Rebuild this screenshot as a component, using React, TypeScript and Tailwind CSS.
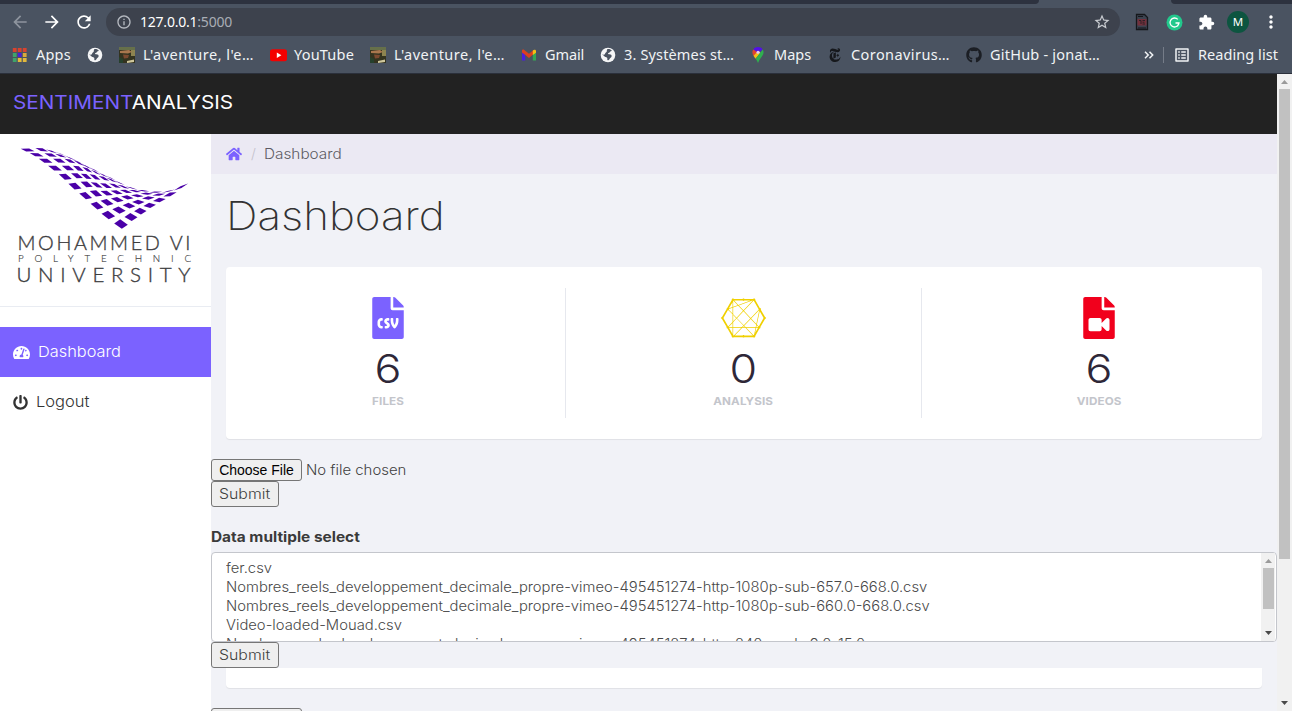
import React from "react";
import {
  FaConnectdevelop,
  FaFileCsv,
  FaFileVideo,
  FaGithub,
  FaHome,
  FaPowerOff,
  FaTachometerAlt,
} from "react-icons/fa";
import {
  MdArrowBack,
  MdArrowForward,
  MdExtension,
  MdInfoOutline,
  MdMoreVert,
  MdOutlineListAlt,
  MdRefresh,
  MdStarBorder,
} from "react-icons/md";
import { SiNewyorktimes } from "react-icons/si";

function AppsIcon() {
  const rows = [
    ["#d8432f", "#d8432f", "#d8432f"],
    ["#3fa46a", "#4b1fd6", "#d9a93c"],
    ["#3fa46a", "#e3b93c", "#e3b93c"],
  ];
  return (
    <svg width="16" height="16" viewBox="0 0 16 16">
      {rows.map((row, y) =>
        row.map((c, x) => <rect key={`${x}-${y}`} x={0.8 + x * 5} y={1 + y * 5} width="3.8" height="4" fill={c} />),
      )}
    </svg>
  );
}

function Globe() {
  return (
    <svg width="16" height="16" viewBox="0 0 16 16">
      <circle cx="8" cy="8" r="7.3" fill="#f5f6f7" />
      <path d="M7.2 2.2c1.6-.4 4 .3 4.600 1.400-.3 1-1.500.7-1.900 1.500-.3.900-1.300.6-1.800 1.200-.3.700.3 1 1.200 1 1.400-.1 2.600.8 2.300 2.100-.4 1.100-1.600 1.300-1.900 2.300-.2.800-1.100 1.600-2 1.500-.9-.3.100-1.600-.6-2.400-.8-.8-2.300-.5-2.900-1.800L2 7.200c.2 0 1.600.8 2.500.4.900-.3.300-1.400 1.100-1.900.8-.3 1.400-.8 1.100-1.600z" fill="#4a5361" />
    </svg>
  );
}

function PhotoIcon() {
  return (
    <svg width="16" height="16" viewBox="0 0 16 16">
      <rect width="16" height="16" fill="#34331f" />
      <rect width="16" height="3" fill="#66704a" />
      <rect x="12" y="3" width="4" height="6" fill="#8d8450" />
      <path d="M1 4l9-1 3 2-4 1.500-8-.5z" fill="#a9774e" />
      <path d="M4 7.500l6 .5-1 3-4 .5z" fill="#7d4a30" />
      <path d="M0 10l4 2v4H0z" fill="#26402c" />
      <path d="M8 14l7-1.500v2.500l-7 1z" fill="#cfc79c" />
    </svg>
  );
}

function YoutubeIcon() {
  return (
    <svg width="17" height="16" viewBox="0 0 17 16" className="shrink-0">
      <rect x="0" y="2.200" width="17" height="12" rx="2.500" fill="#f40000" />
      <path d="M6.800 5.500l4.600 2.700-4.600 2.700z" fill="#fff" />
    </svg>
  );
}

function GmailIcon() {
  return (
    <svg width="16" height="16" viewBox="0 0 16 16">
      <path d="M1 4v9.500h3.200V6z" fill="#4a1fe0" />
      <path d="M11.800 6v7.500H15V4z" fill="#34a853" />
      <path d="M1 3.500C1 2.500 2.500 2.300 3.300 3L8 6.700 12 3.500V7.500L8 10.900 4 7.700 1 5.500z" fill="#dc3f1f" />
      <path d="M11.800 3.500c1-1 3.200-.9 3.200.6v1.600l-3.200 2.300z" fill="#f6bd16" />
    </svg>
  );
}

function MapsIcon() {
  return (
    <svg width="16" height="18" viewBox="0 0 16 18">
      <path d="M3.300 3.500a5.600 5.600 0 0 1 9.400 0L8 7.500z" fill="#5310e8" />
      <path d="M3.300 3.500C1.800 5.500 2.300 8 3.500 9.800L8 6.500z" fill="#e0452f" />
      <path d="M3.500 9.800l5-5 2 2-5 6z" fill="#f6bd16" />
      <path d="M12.700 3.500c2 3.300.2 5.800-1.700 8.200C9.600 13.500 8.800 15 8 17c-.6-1.700-1.300-3-2.400-4.300z" fill="#2fb04f" />
      <circle cx="8" cy="6.300" r="1.500" fill="#d9d0f5" />
    </svg>
  );
}

function Bookmark({ icon, children, className }: { icon: React.ReactNode; children?: React.ReactNode; className: string }) {
  return (
    <div className="mr-4 flex shrink-0 items-center">
      <span className="flex w-4 shrink-0 items-center justify-center">{icon}</span>
      {children && <span className={"ml-2 whitespace-nowrap " + className}>{children}</span>}
    </div>
  );
}

function BrowserChrome() {
  return (
    <header className="flex h-[74px] shrink-0 flex-col border-b border-[#2b303b] bg-[#4a5361] font-['Noto_Sans',sans-serif] text-[#f1f3f5]">
      <div className="flex h-1 shrink-0">
        <div className="w-[1039px] rounded-br-[4px] bg-[#2d323f]" />
        <div className="flex-1" />
        <div className="w-[121px] rounded-bl-[4px] bg-[#2d323f]" />
      </div>
      <div className="flex h-9 shrink-0 items-center">
        <MdArrowBack className="ml-[10px] size-5 text-[#8e949e]" />
        <MdArrowForward className="ml-3 size-5 text-white" />
        <MdRefresh className="ml-3 size-5 text-white" />
        <div className="ml-3 flex h-7 w-[1014px] items-center rounded-full bg-[#3d424d] pr-[9px] pl-[10px]">
          <MdInfoOutline className="size-4 text-[#b6bac1]" />
          <span className="ml-2 text-[14px] leading-7 tracking-[-0.22px] text-white">
            127.0.0.1<span className="text-[#a9adb5]">:5000</span>
          </span>
          <MdStarBorder className="ml-auto size-[18px] text-[#c9ccd1]" />
        </div>
        <svg className="ml-[15px]" width="14" height="18" viewBox="0 0 14 18">
          <path d="M1.500 1.500h8l3 3v12h-11z" fill="#3c4350" stroke="#15171b" strokeWidth="1.300" />
          <path d="M3 3.500h5M3 15h8" stroke="#15171b" />
          <rect x="2.500" y="6" width="9" height="6.500" fill="#74303c" />
          <path d="M4 7.500h2v3.500M7.500 7.500h2.500M7.500 9.200h2M7.500 11h2.500" stroke="#2b2228" fill="none" />
        </svg>
        <svg className="ml-[17px]" width="17" height="17" viewBox="0 0 17 17">
          <circle cx="8.500" cy="8.500" r="8" fill="#22c88c" />
          <path d="M11.800 5.400A4.500 4.500 0 1 0 13 9H9.500M13 9l-1.500 3.300" fill="none" stroke="#fff" strokeWidth="1.300" />
        </svg>
        <MdExtension className="ml-[15px] size-[17px] text-white" />
        <span className="ml-[12px] flex size-[22px] items-center justify-center rounded-full bg-[#0d5540] text-[11.5px] font-normal text-white">M</span>
        <MdMoreVert className="ml-[12px] size-5 text-white" />
      </div>
      <div className="flex h-[30px] items-center pl-3 text-[14.5px]">
        <Bookmark icon={<AppsIcon />} className="w-[35px] tracking-[0.2px]">Apps</Bookmark>
        <Bookmark icon={<Globe />} className="" />
        <Bookmark icon={<PhotoIcon />} className="w-[111px] tracking-[0.48px]">L'aventure, l'e…</Bookmark>
        <Bookmark icon={<YoutubeIcon />} className="w-[60px] tracking-[0.2px]">YouTube</Bookmark>
        <Bookmark icon={<PhotoIcon />} className="w-[111px] tracking-[0.48px]">L'aventure, l'e…</Bookmark>
        <Bookmark icon={<GmailIcon />} className="w-[39px] tracking-[-0.1px]">Gmail</Bookmark>
        <Bookmark icon={<Globe />} className="w-[110px] tracking-[0.15px]">3. Systèmes st…</Bookmark>
        <Bookmark icon={<MapsIcon />} className="w-[37px]">Maps</Bookmark>
        <Bookmark icon={<SiNewyorktimes className="size-[14px] text-[#16181c]" />} className="w-[99px] tracking-[0.42px]">Coronavirus…</Bookmark>
        <Bookmark icon={<FaGithub className="size-4 text-[#1b1e24]" />} className="w-[110px] tracking-[0.22px]">GitHub - jonat…</Bookmark>
        <svg className="ml-[28px] shrink-0" width="10" height="10" viewBox="0 0 10 10" fill="none" stroke="#f1f3f5" strokeWidth="1.500">
          <path d="M1 1.800L4.200 5 1 8.200M5.500 1.800L8.700 5 5.500 8.200" />
        </svg>
        <div className="ml-[9px] h-4 w-px bg-[#757c88]" />
        <MdOutlineListAlt className="ml-[9px] size-[18px] shrink-0" />
        <span className="ml-[7px] tracking-[0.06px] whitespace-nowrap">Reading list</span>
      </div>
    </header>
  );
}

const MESH: [number, number][][] = [
  [[83, 223], [110, 237], [137, 255], [165, 277], [196, 303], [225, 331], [257, 360], [291, 390], [325, 418], [363, 445]],
  [[125, 222], [152, 238], [178, 255], [204, 277], [231, 300], [260, 326], [288, 353], [321, 380], [357, 403], [393, 424]],
  [[155, 227], [182, 240], [210, 256], [235, 278], [259, 302], [290, 328], [320, 352], [352, 372], [387, 390], [421, 406]],
  [[183, 235], [211, 247], [237, 262], [262, 282], [285, 304], [318, 330], [350, 350], [382, 365], [415, 379], [449, 389]],
  [[208, 246], [236, 259], [261, 273], [287, 290], [312, 308], [345, 330], [378, 347], [412, 360], [445, 367], [478, 373]],
  [[230, 257], [259, 270], [285, 284], [310, 298], [335, 313], [370, 333], [405, 346], [440, 354], [476, 357], [510, 356]],
  [[250, 268], [280, 281], [306, 294], [332, 307], [358, 321], [395, 337], [430, 345], [467, 349], [505, 347], [543, 334]],
];

function meshTiles() {
  const out: string[] = [];
  MESH.forEach((row, j) =>
    row.forEach(([x, y], i) => {
      const i0 = Math.max(i - 1, 0);
      const i1 = Math.min(i + 1, 9);
      const j0 = Math.max(j - 1, 0);
      const j1 = Math.min(j + 1, 6);
      const k = 0.3;
      const ux = ((row[i1][0] - row[i0][0]) / (i1 - i0)) * k;
      const uy = ((row[i1][1] - row[i0][1]) / (i1 - i0)) * k;
      const vx = ((MESH[j1][i][0] - MESH[j0][i][0]) / (j1 - j0)) * k;
      const vy = ((MESH[j1][i][1] - MESH[j0][i][1]) / (j1 - j0)) * k;
      out.push(
        [
          [x - ux - vx, y - uy - vy],
          [x - ux + vx, y - uy + vy],
          [x + ux + vx, y + uy + vy],
          [x + ux - vx, y + uy - vy],
        ]
          .map(([px, py]) => `${(px / 3).toFixed(2)},${(py / 3 - 58.3).toFixed(2)}`)
          .join(" "),
      );
    }),
  );
  return out;
}

function UniversityLogo() {
  return (
    <svg width="211" height="160" viewBox="0 0 211 160" className="block">
      <g fill="#4a00a8">
        {meshTiles().map((points, i) => (
          <polygon key={i} points={points} />
        ))}
      </g>
      <g fill="#3c3c3e" stroke="#3c3c3e" strokeWidth="0.350" className="font-[Lato,sans-serif] font-light">
        <text x="17.500" y="116" fontSize="19.800" textLength="173">MOHAMMED VI</text>
        <text x="18" y="127.800" fontSize="9.800" textLength="173" strokeWidth="0.150">POLYTECHNIC</text>
        <text x="16.500" y="148" fontSize="20.500" textLength="174">UNIVERSITY</text>
      </g>
    </svg>
  );
}

function Sidebar() {
  return (
    <aside className="flex w-[211px] shrink-0 flex-col bg-white text-[15px] font-light text-[#333]">
      <div className="h-[173px] border-b border-[#e9ecf2]">
        <UniversityLogo />
      </div>
      <nav className="mt-5 flex flex-col">
        <a className="flex h-[50px] items-center bg-[#7b62ff] pl-[13px] text-white">
          <FaTachometerAlt className="size-[17px]" />
          <span className="ml-2 origin-left scale-x-[1.09]">Dashboard</span>
        </a>
        <a className="flex h-[50px] items-center pl-[13px]">
          <FaPowerOff className="size-[15px]" />
          <span className="ml-2 origin-left scale-x-[1.1]">Logout</span>
        </a>
      </nav>
    </aside>
  );
}

function Stat({ icon, value, label, last }: { icon: React.ReactNode; value: string; label: string; last?: boolean }) {
  return (
    <div className={"flex flex-1 flex-col items-center border-r pt-[9px] " + (last ? "border-transparent" : "border-[#e6e8ee]")}>
      <div className="flex h-[42px] items-center">{icon}</div>
      <div className="mt-[5px] flex h-[50px] items-center text-[40px] leading-none font-light text-[#2e2738]">
        <span className="inline-block scale-x-112">{value}</span>
      </div>
      <div className="scale-x-[1.06] text-[11px] leading-[14px] font-bold tracking-[0.1px] text-[#c3c5cb]">{label}</div>
    </div>
  );
}

function NativeButton({ children, className }: { children?: React.ReactNode; className: string }) {
  return (
    <button className={"flex items-center justify-center rounded-[3px] border border-[#767676] bg-[#efefef] whitespace-nowrap " + className}>
      {children}
    </button>
  );
}

function SubmitButton() {
  return (
    <NativeButton className="h-[26px] w-[68px] shrink-0 pb-[2px] text-[14px]">
      <span className="inline-block scale-x-[1.13]">Submit</span>
    </NativeButton>
  );
}

function Triangle({ up, color }: { up?: boolean; color: string }) {
  return (
    <svg width="7" height="4" viewBox="0 0 7 4" className="shrink-0">
      <path d={up ? "M0 4L3.500 0 7 4z" : "M0 0l3.500 4L7 0z"} fill={color} />
    </svg>
  );
}

const FILES = [
  "fer.csv",
  "Nombres_reels_developpement_decimale_propre-vimeo-495451274-http-1080p-sub-657.0-668.0.csv",
  "Nombres_reels_developpement_decimale_propre-vimeo-495451274-http-1080p-sub-660.0-668.0.csv",
  "Video-loaded-Mouad.csv",
  "Nombres_reels_developpement_decimale_propre-vimeo-495451274-http-240p-sub-9.0-15.0.csv",
];

function Main() {
  return (
    <main className="flex flex-1 flex-col bg-[#f1f2f7] text-[14px] font-light text-[#3f3f3f]">
      <div className="flex h-10 shrink-0 items-center bg-[#ebe9f3] pl-[15px]">
        <FaHome className="size-4 text-[#7b62ff]" />
        <span className="ml-[9px] pb-[2px] text-[#c3c1cb]">/</span>
        <span className="ml-2 origin-left scale-x-[1.095] pb-[2px] text-[#5d5b63]">Dashboard</span>
      </div>
      <h1 className="ml-[15px] flex h-[93px] shrink-0 items-center pb-[11px] text-[39px] leading-none font-extralight text-[#333]">
        <span className="inline-block origin-left scale-x-[1.125]">Dashboard</span>
      </h1>
      <section className="mx-[15px] flex h-[172px] shrink-0 rounded-[4px] bg-white py-[21px] shadow-[0_1px_1px_rgba(0,0,0,0.07)]">
        <div className="-mx-[15px] flex flex-1">
          <Stat icon={<FaFileCsv className="size-[42px] text-[#7b62ff]" />} value="6" label="FILES" />
          <Stat icon={<FaConnectdevelop className="h-[42px] w-[47px] text-[#f0d000]" />} value="0" label="ANALYSIS" />
          <Stat icon={<FaFileVideo className="size-[42px] text-[#f1001c]" />} value="6" label="VIDEOS" last />
        </div>
      </section>
      <div className="mt-5 flex h-[22px] shrink-0 items-center">
        <NativeButton className="h-[22px] w-[91px] font-['Liberation_Sans',sans-serif] font-normal text-black">Choose File</NativeButton>
        <span className="ml-1 origin-left scale-x-[1.065] pb-[2px]">No file chosen</span>
      </div>
      <SubmitButton />
      <label className="mt-5 h-[25px] shrink-0 leading-[19px] font-bold text-[#3a3a3a]">
        <span className="inline-block origin-left scale-x-[1.1]">Data multiple select</span>
      </label>
      <div className="flex h-[90px] w-[1066px] shrink-0 rounded-[4px] border border-[#c4c6cc] bg-white">
        <div className="flex flex-1 flex-col items-start overflow-hidden pt-[5px] pl-[14px] text-[#484848]">
          {FILES.map((f) => (
            <div key={f} className="h-[19px] shrink-0 origin-left scale-x-[1.056] leading-[19px] whitespace-nowrap">
              {f}
            </div>
          ))}
        </div>
        <div className="mr-[1px] flex w-[14px] flex-col items-center bg-[#f1f1f1] pt-[6px] pb-[6px]">
          <Triangle up color="#9a9a9a" />
          <div className="mt-[5px] h-[41px] w-[11px] bg-[#c1c1c1]" />
          <div className="flex-1" />
          <Triangle color="#4a4a4a" />
        </div>
      </div>
      <SubmitButton />
      <section className="mx-[15px] h-5 shrink-0 rounded-b-[4px] bg-white shadow-[0_1px_1px_rgba(0,0,0,0.07)]" />
      <NativeButton className="mt-5 h-[22px] w-[91px] shrink-0" />
    </main>
  );
}

export default function App() {
  return (
    <div className="flex h-[711px] w-[1292px] flex-col overflow-hidden bg-white font-[Inter,sans-serif]">
      <BrowserChrome />
      <div className="flex min-h-0 flex-1">
        <div className="flex w-[1277px] flex-col overflow-hidden">
          <div className="flex h-[60px] shrink-0 items-center bg-[#222] pb-[2px] pl-[13px] text-[19px] text-white">
            <span className="inline-block origin-left scale-x-[1.09]">
              <span className="text-[#7b62ff]">SENTIMENT</span>ANALYSIS
            </span>
          </div>
          <div className="flex min-h-0 flex-1">
            <Sidebar />
            <Main />
          </div>
        </div>
        <div className="flex w-[15px] flex-col items-center bg-[#f1f1f1] pt-[6px] pb-[6px]">
          <Triangle up color="#9a9a9a" />
          <div className="mt-[5px] h-[470px] w-[11px] bg-[#c1c1c1]" />
          <div className="flex-1" />
          <Triangle color="#4a4a4a" />
        </div>
      </div>
    </div>
  );
}
